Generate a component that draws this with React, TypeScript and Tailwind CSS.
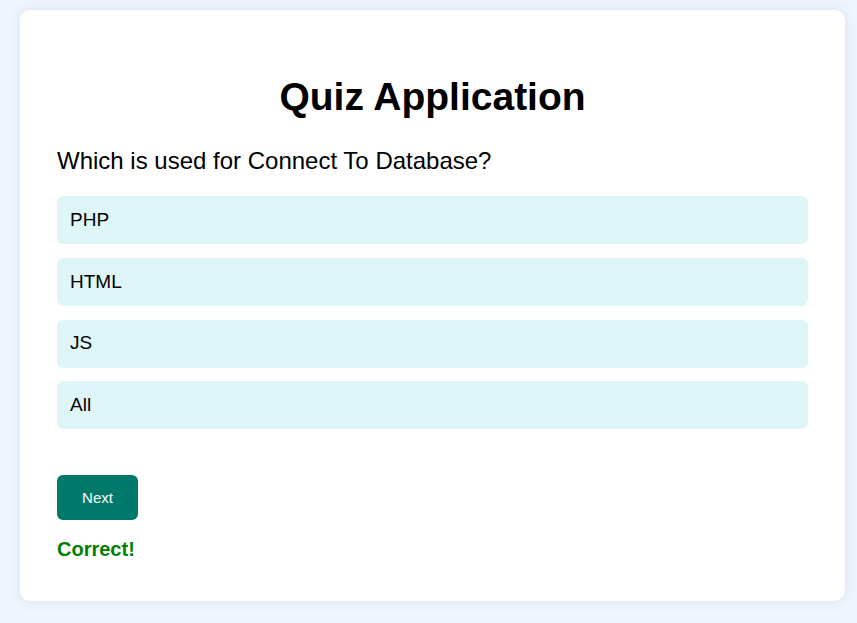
import React, { useState } from 'react';

const QUESTION = {
  text: 'Which is used for Connect To Database?',
  options: ['PHP', 'HTML', 'JS', 'All'],
};

export default function App() {
  const [selected, setSelected] = useState<string | null>(null);

  return (
    <div className="min-h-[623px] w-full bg-[#eff6ff] pt-[10px] pb-[22px] pl-[20px]" style={{ fontFamily: '"Liberation Sans", Arial, sans-serif' }}>
      <div className="w-[825px] rounded-[10px] bg-white px-[37px] pt-[65px] pb-[40px] shadow-[0_0_14px_rgba(30,60,120,0.12)]">
        <h1 className="text-center text-[39px] font-bold leading-[44px] text-black">Quiz Application</h1>

        <p className="mt-[28px] text-[24px] leading-[28px] text-black">{QUESTION.text}</p>

        {/* Options */}
        <div className="mt-[21px] flex flex-col gap-[13.8px]">
          {QUESTION.options.map((opt) => (
            <button
              key={opt}
              onClick={() => setSelected(opt)}
              className="flex h-[48px] w-full items-center rounded-[6px] bg-[#dff6f9] px-[13px] text-left text-[19px] text-black"
            >
              {opt}
            </button>
          ))}
        </div>

        <button className="mt-[46px] h-[45px] w-[81px] rounded-[6px] bg-[#00796b] text-[15px] text-white">
          Next
        </button>

        <p className="mt-[18px] text-[20px] font-bold leading-[23px] text-[#008000]">
          {selected === null || selected ? 'Correct!' : ''}
        </p>
      </div>
    </div>
  );
}
